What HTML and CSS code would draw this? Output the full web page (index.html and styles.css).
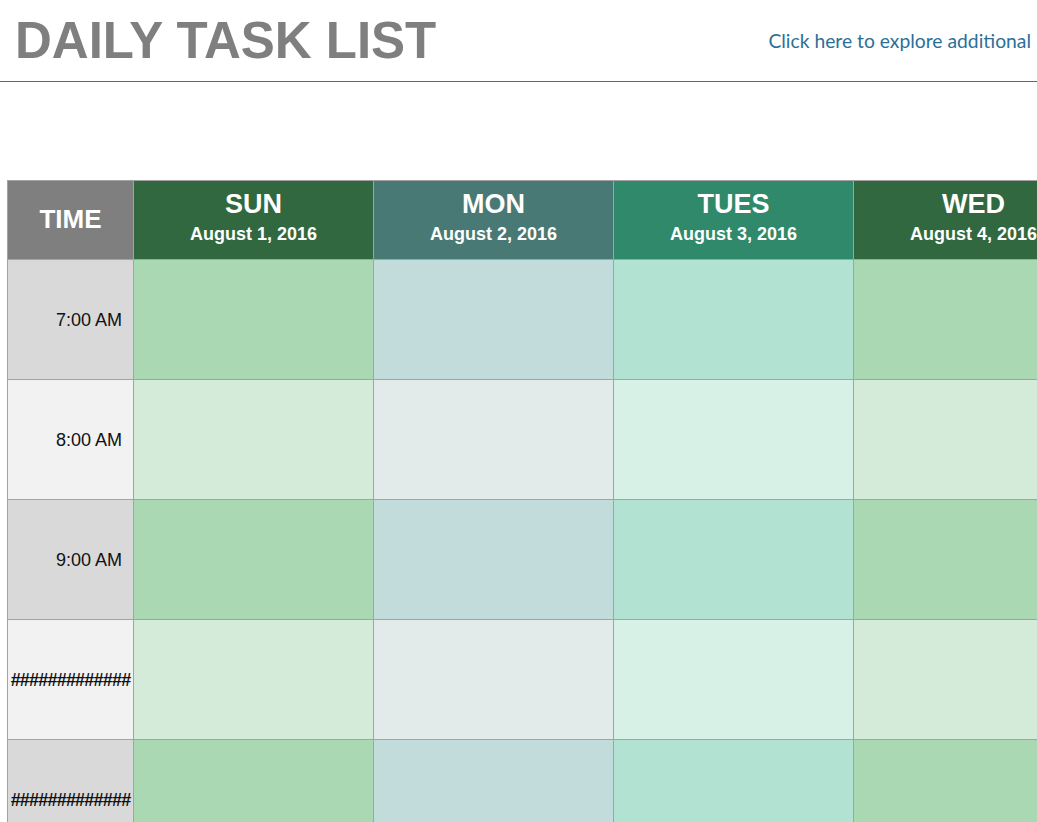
FILE: index.html
```html
<!DOCTYPE html>
<html>
<head>
<meta charset="utf-8">
<link rel="stylesheet" href="styles.css">
</head>
<body>
<header class="top">
  <h1 class="title">DAILY TASK LIST</h1>
  <a class="link" href="#">Click here to explore additional</a>
</header>
<main class="sheet">
  <div class="grid">
    <div class="hd time-hd">TIME</div>
    <div class="hd c1"><span class="day">SUN</span><span class="date">August 1, 2016</span></div>
    <div class="hd c2"><span class="day">MON</span><span class="date">August 2, 2016</span></div>
    <div class="hd c3"><span class="day">TUES</span><span class="date">August 3, 2016</span></div>
    <div class="hd c1"><span class="day">WED</span><span class="date">August 4, 2016</span></div>

    <div class="tm odd">7:00 AM</div>
    <div class="cell c1 odd"></div><div class="cell c2 odd"></div><div class="cell c3 odd"></div><div class="cell c1 odd"></div>

    <div class="tm even">8:00 AM</div>
    <div class="cell c1 even"></div><div class="cell c2 even"></div><div class="cell c3 even"></div><div class="cell c1 even"></div>

    <div class="tm odd">9:00 AM</div>
    <div class="cell c1 odd"></div><div class="cell c2 odd"></div><div class="cell c3 odd"></div><div class="cell c1 odd"></div>

    <div class="tm even hash">#############</div>
    <div class="cell c1 even"></div><div class="cell c2 even"></div><div class="cell c3 even"></div><div class="cell c1 even"></div>

    <div class="tm odd hash">#############</div>
    <div class="cell c1 odd"></div><div class="cell c2 odd"></div><div class="cell c3 odd"></div><div class="cell c1 odd"></div>
  </div>
</main>
</body>
</html>
```

FILE: styles.css
```css
html, body {
  margin: 0;
  padding: 0;
  background: #ffffff;
  overflow: hidden;
  width: 1037px;
  height: 822px;
}
body {
  font-family: "Liberation Sans", Arial, sans-serif;
}
.top {
  display: flex;
  justify-content: space-between;
  align-items: flex-start;
  height: 82px;
  border-bottom: 1px solid #666666;
  box-sizing: border-box;
}
.title {
  margin: 0;
  padding: 15px 0 0 15px;
  font-size: 51px;
  line-height: 52px;
  font-weight: bold;
  color: #7f7f7f;
}
.link {
  margin: 29px 6px 0 0;
  font-family: Lato, "Open Sans", sans-serif;
  font-size: 19.3px;
  line-height: 24px;
  color: #2b6f98;
  text-decoration: none;
  white-space: nowrap;
}
.sheet {
  padding: 98px 0 0 7px;
  overflow: hidden;
}
.grid {
  display: grid;
  grid-template-columns: 125px 239px 239px 239px 239px;
  grid-template-rows: 78px repeat(5, 119px);
  gap: 1px;
  background: #a3a3a3;
  border: 1px solid #a3a3a3;
  width: max-content;
}
.hd {
  display: flex;
  flex-direction: column;
  align-items: center;
  justify-content: center;
  color: #ffffff;
  font-weight: bold;
}
.time-hd {
  background: #7f7f7f;
  font-size: 26px;
  padding-bottom: 1px;
}
.hd .day {
  font-size: 27px;
  line-height: 30px;
}
.hd .date {
  font-size: 18px;
  line-height: 30px;
  margin-bottom: 2px;
}
.hd.c1 { background: #31683f; }
.hd.c2 { background: #497975; }
.hd.c3 { background: #2f896a; }

.cell.c1.odd { background: #a9d8b3; }
.cell.c2.odd { background: #c2dbdb; }
.cell.c3.odd { background: #b2e3d2; }
.cell.c1.even { background: #d4ebda; }
.cell.c2.even { background: #e2ebe9; }
.cell.c3.even { background: #d7f1e7; }

.tm {
  display: flex;
  align-items: center;
  justify-content: flex-end;
  padding: 2px 11px 0 0;
  font-size: 18px;
  color: #111111;
  overflow: hidden;
  white-space: nowrap;
}
.tm.odd { background: #d9d9d9; }
.tm.even { background: #f2f2f2; }
.tm.hash {
  justify-content: center;
  padding-right: 0;
  font-weight: bold;
  letter-spacing: -0.8px;
}
```
